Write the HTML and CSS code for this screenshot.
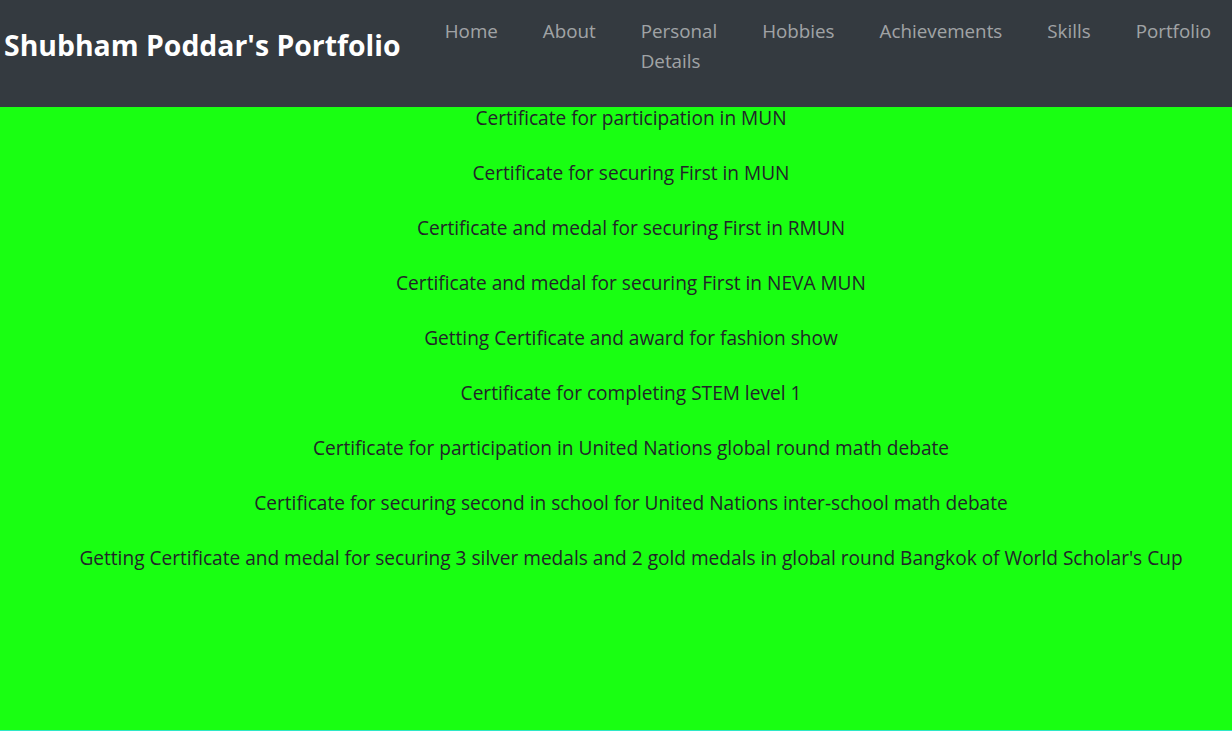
FILE: index.html
```html
<!DOCTYPE html>
<html lang="en">
<head>
<meta charset="utf-8">
<title>Shubham Poddar's Portfolio</title>
<link rel="stylesheet" href="styles.css">
</head>
<body>
<header class="navbar">
  <a class="brand" href="#">Shubham Poddar's Portfolio</a>
  <nav>
    <ul class="nav-list">
      <li><a class="nav-link" href="#">Home</a></li>
      <li><a class="nav-link" href="#">About</a></li>
      <li><a class="nav-link" href="#">Personal Details</a></li>
      <li><a class="nav-link" href="#">Hobbies</a></li>
      <li><a class="nav-link" href="#">Achievements</a></li>
      <li><a class="nav-link" href="#">Skills</a></li>
      <li><a class="nav-link" href="#">Portfolio</a></li>
    </ul>
  </nav>
</header>
<main class="achievements">
  <p>Certificate for participation in MUN</p>
  <p>Certificate for securing First in MUN</p>
  <p>Certificate and medal for securing First in RMUN</p>
  <p>Certificate and medal for securing First in NEVA MUN</p>
  <p>Getting Certificate and award for fashion show</p>
  <p>Certificate for completing STEM level 1</p>
  <p>Certificate for participation in United Nations global round math debate</p>
  <p>Certificate for securing second in school for United Nations inter-school math debate</p>
  <p>Getting Certificate and medal for securing 3 silver medals and 2 gold medals in global round Bangkok of World Scholar's Cup</p>
</main>
<section class="next-section"></section>
</body>
</html>
```

FILE: styles.css
```css
* { box-sizing: border-box; }

html, body {
  margin: 0;
  padding: 0;
}

body {
  font-family: "Open Sans", "Noto Sans", sans-serif;
  color: #212529;
  background: #2ee8c8;
}

.navbar {
  height: 107px;
  background: #343a40;
  display: flex;
  justify-content: space-between;
  align-items: flex-start;
  padding: 0 21px 0 4px;
}

.brand {
  color: #ffffff;
  text-decoration: none;
  font-weight: 700;
  font-size: 28.4px;
  line-height: 36px;
  margin-top: 27px;
}

.nav-list {
  list-style: none;
  margin: 16px 0 0 0;
  padding: 0;
  display: flex;
  gap: 45px;
}

.nav-link {
  display: block;
  width: min-content;
  color: rgba(255, 255, 255, 0.55);
  text-decoration: none;
  font-size: 18.8px;
  line-height: 30px;
}

.achievements {
  height: 623px;
  background: #19ff12;
  display: flex;
  flex-direction: column;
  align-items: center;
  text-align: center;
  gap: 25px;
  padding-left: 30px;
}

.achievements p {
  margin: 0;
  font-size: 19.1px;
  line-height: 30px;
}

.achievements p:first-child {
  margin-top: -4px;
}

.next-section {
  height: 200px;
  background: #2ee8c8;
}
```
